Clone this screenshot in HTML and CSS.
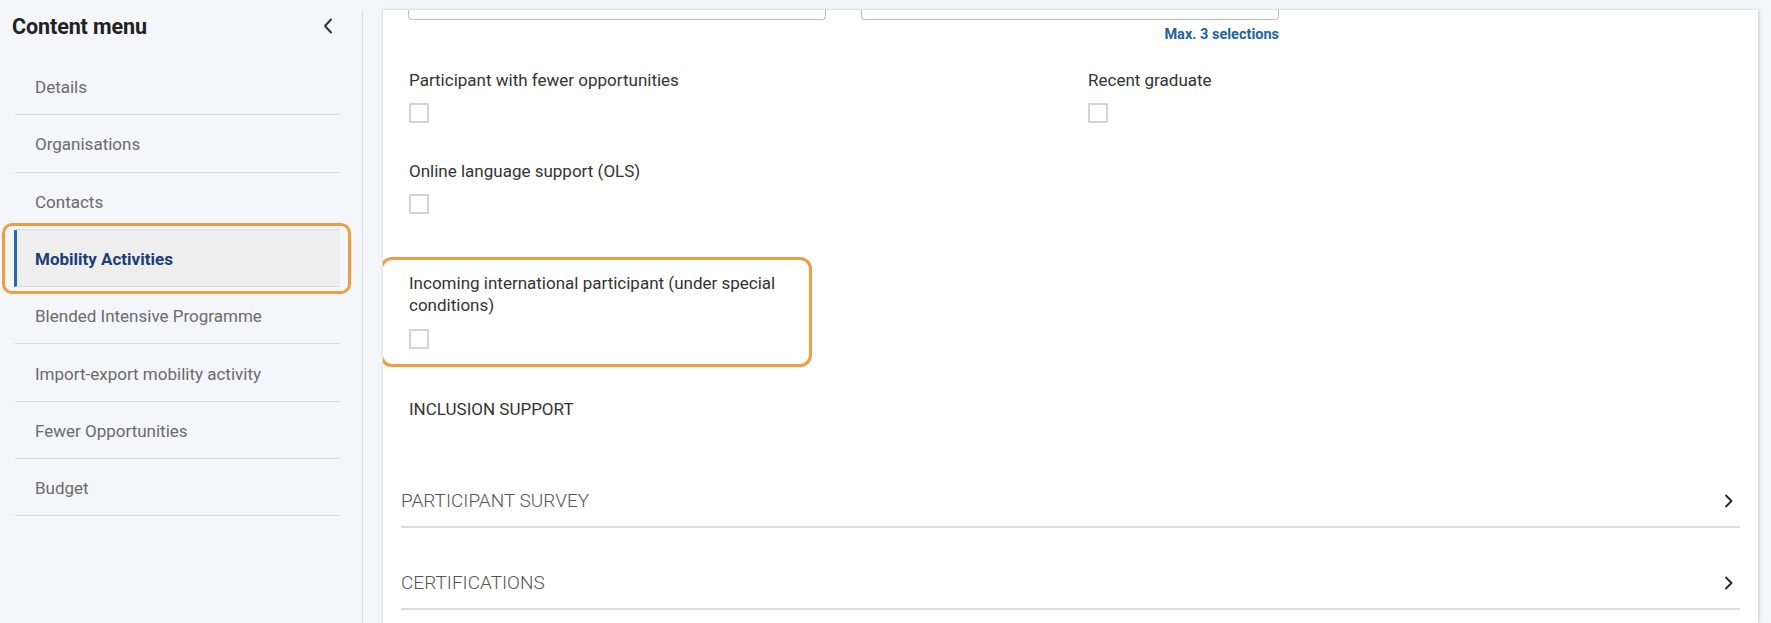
FILE: index.html
```html
<!DOCTYPE html>
<html lang="en">
<head>
<meta charset="utf-8">
<title>Mobility Activities</title>
<link rel="stylesheet" href="styles.css">
</head>
<body>
<div class="layout">
  <aside class="sidebar">
    <div class="sidebar-head">
      <h2 class="sidebar-title">Content menu</h2>
      <span class="collapse">
        <svg width="10" height="16" viewBox="0 0 10 16"><path d="M8 1.5 L2 8 L8 14.5" fill="none" stroke="#333" stroke-width="2" stroke-linecap="round" stroke-linejoin="round"/></svg>
      </span>
    </div>
    <ul class="menu">
      <li class="menu-item">Details</li>
      <li class="menu-item">Organisations</li>
      <li class="menu-item">Contacts</li>
      <li class="menu-item active">Mobility Activities<span class="mark mark-menu"></span></li>
      <li class="menu-item">Blended Intensive Programme</li>
      <li class="menu-item">Import-export mobility activity</li>
      <li class="menu-item">Fewer Opportunities</li>
      <li class="menu-item">Budget</li>
    </ul>
  </aside>

  <main class="panel">
    <div class="inputs-row">
      <div class="field-input">
        <div class="input"></div>
      </div>
      <div class="field-input">
        <div class="input"></div>
        <div class="hint">Max. 3 selections</div>
      </div>
    </div>

    <div class="check-grid">
      <div class="check-field">
        <div class="check-label">Participant with fewer opportunities</div>
        <span class="checkbox"></span>
      </div>
      <div class="check-field">
        <div class="check-label">Recent graduate</div>
        <span class="checkbox"></span>
      </div>
      <div class="check-field">
        <div class="check-label">Online language support (OLS)</div>
        <span class="checkbox"></span>
      </div>
    </div>

    <div class="check-field incoming">
      <div class="check-label">Incoming international participant (under special conditions)</div>
      <span class="checkbox"></span>
      <span class="mark mark-field"></span>
    </div>

    <div class="section-label">INCLUSION SUPPORT</div>

    <div class="accordion">
      <div class="acc-item">
        <span class="acc-title">PARTICIPANT SURVEY</span>
        <svg class="acc-icon" width="10" height="14" viewBox="0 0 10 14"><path d="M2 1.5 L7.5 7 L2 12.5" fill="none" stroke="#222" stroke-width="1.8" stroke-linecap="round" stroke-linejoin="round"/></svg>
      </div>
      <div class="acc-item">
        <span class="acc-title">CERTIFICATIONS</span>
        <svg class="acc-icon" width="10" height="14" viewBox="0 0 10 14"><path d="M2 1.5 L7.5 7 L2 12.5" fill="none" stroke="#222" stroke-width="1.8" stroke-linecap="round" stroke-linejoin="round"/></svg>
      </div>
    </div>
  </main>
</div>
</body>
</html>
```

FILE: styles.css
```css
* { box-sizing: border-box; }

html, body {
  margin: 0;
  padding: 0;
  height: 100%;
  overflow: hidden;
}

body {
  background: #f5f6f9;
  font-family: Roboto, "Liberation Sans", Arial, sans-serif;
  color: #333;
}

.layout {
  display: flex;
  align-items: stretch;
  padding-top: 10px;
  height: 623px;
}

/* Sidebar */
.sidebar {
  width: 363px;
  flex: 0 0 363px;
  border-right: 1px solid #dcdde0;
  background: #f5f6f9;
}

.sidebar-head {
  display: flex;
  align-items: center;
  justify-content: space-between;
  height: 32px;
  margin-top: -10px;
  padding: 10px 29px 0 12px;
  box-sizing: content-box;
}

.sidebar-title {
  margin: 0;
  font-size: 21.5px;
  font-weight: 700;
  color: #222;
  letter-spacing: -0.1px;
}

.collapse {
  display: flex;
  align-items: center;
}

.menu {
  list-style: none;
  margin: 16px 0 0 15px;
  padding: 0;
  width: 325px;
}

.menu-item {
  position: relative;
  height: 57.3px;
  display: flex;
  align-items: center;
  padding-left: 20px;
  padding-top: 2px;
  border-bottom: 1px solid #dadbdd;
  font-size: 17px;
  color: #6b6b6b;
}

.menu-item.active {
  background: #eeeeee;
  color: #1b3d7a;
  font-weight: 700;
  border-left: 3px solid #2a69a8;
  margin-left: -1px;
  padding-left: 18px;
}

/* Orange annotation marks */
.mark {
  position: absolute;
  border: 3px solid #f09c45;
  pointer-events: none;
}

.mark-menu {
  left: -15px;
  right: -11px;
  top: -7px;
  bottom: -8px;
  border-radius: 10px;
}

.mark-field {
  left: -29px;
  top: -15px;
  width: 432px;
  bottom: -18px;
  border-radius: 12px;
}

/* Main panel */
.panel {
  margin-left: 19px;
  width: 1376px;
  flex: 0 0 1376px;
  background: #fff;
  border-left: 1px solid #e2e3e6;
  box-shadow: 1px 0 3px rgba(0, 0, 0, 0.18);
  padding: 0 18px 0 26px;
  overflow: hidden;
}

.inputs-row {
  display: flex;
  gap: 36px;
}

.field-input {
  width: 418px;
  margin-left: -1px;
}

.input {
  height: 10px;
  border: 1px solid #bdbdbd;
  border-top: none;
  border-radius: 0 0 4px 4px;
}

.hint {
  margin-top: 7px;
  text-align: right;
  font-size: 14.5px;
  line-height: 16px;
  font-weight: 700;
  color: #24629d;
}

.check-grid {
  display: grid;
  grid-template-columns: 679px 1fr;
  row-gap: 37px;
  margin-top: 26px;
}

.check-field {
  display: flex;
  flex-direction: column;
  align-items: flex-start;
}

.check-label {
  font-size: 17px;
  line-height: 22px;
  color: #333;
}

.checkbox {
  display: block;
  width: 20px;
  height: 20px;
  margin-top: 12px;
  border: 2px solid #d4d4d4;
  border-radius: 1px;
  background: #fff;
}

.incoming {
  position: relative;
  width: 400px;
  margin-top: 58px;
}

.incoming .checkbox {
  margin-top: 13px;
}

.section-label {
  margin-top: 49px;
  font-size: 17px;
  line-height: 22px;
  color: #333;
}

.accordion {
  margin-left: -8px;
  margin-top: 26px;
}

.acc-item {
  display: flex;
  align-items: center;
  justify-content: space-between;
  padding: 44px 6px 14px 0;
  border-bottom: 2px solid #dddddd;
}

.acc-title {
  font-size: 19px;
  line-height: 22px;
  font-weight: 300;
  color: #555;
}

.acc-icon {
  display: block;
}
```
